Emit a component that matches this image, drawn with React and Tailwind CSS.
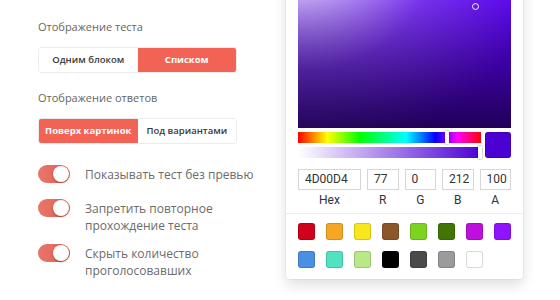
import React from 'react';

const font = { fontFamily: '"Open Sans", "Noto Sans", sans-serif' };

const swatches = [
  '#D0021B', '#F5A623', '#F8E71C', '#8B572A', '#7ED321', '#417505', '#BD10E0', '#9013FE',
  '#4A90E2', '#50E3C2', '#B8E986', '#000000', '#4A4A4A', '#9B9B9B', '#FFFFFF',
];

function Segmented({ left, right, active }) {
  const on = 'bg-[#f26355] text-white font-bold';
  const off = 'bg-white text-[#3a3a3a] font-semibold';
  return (
    <div className="flex h-[26px] w-[199px] overflow-hidden rounded-[3px] border border-[#ebebeb] text-[9.5px]">
      <button className={`flex-1 ${active === 0 ? on : off}`}>{left}</button>
      <button className={`flex-1 ${active === 1 ? on : off}`}>{right}</button>
    </div>
  );
}

function Toggle() {
  return (
    <div className="relative -mt-[1px] h-[18px] w-[32px] shrink-0 rounded-full bg-gradient-to-r from-[#e8766a] to-[#e55d50]">
      <div className="absolute right-[1px] top-[1px] h-[16px] w-[16px] rounded-full bg-white shadow-[0_1px_2px_rgba(0,0,0,0.35)]" />
    </div>
  );
}

function Option({ children, className = '' }) {
  return (
    <div className={`flex items-start gap-[15px] ${className}`}>
      <Toggle />
      <div className="w-[170px] text-[12px] leading-[17px] text-[#6b6b6b]">{children}</div>
    </div>
  );
}

function Field({ value, label, hex }) {
  return (
    <div className={hex ? 'flex-[2]' : 'flex-1 pl-[6px]'}>
      <div className="h-[21px] w-full border border-[#d6d6d6] pl-[6px] text-[12px] leading-[19px] text-[#333]">
        {value}
      </div>
      <div className="mt-[3px] text-center text-[12px] leading-[15px] text-[#333]">{label}</div>
    </div>
  );
}

function Picker() {
  return (
    <div
      className="-mt-[45px] w-[237px] self-start rounded-[4px] bg-white shadow-[0_0_0_1px_rgba(0,0,0,0.04),0_6px_14px_rgba(0,0,0,0.13)]"
      style={{ fontFamily: 'Roboto, "Liberation Sans", sans-serif' }}
    >
      <div className="px-[12px] pt-[12px]">
        {/* saturation area */}
        <div className="relative h-[161px] w-full overflow-hidden bg-[#5a00f5]">
          <div className="absolute inset-0 bg-[radial-gradient(ellipse_240px_190px_at_0_0,rgba(255,255,255,0.85),rgba(255,255,255,0.2)_55%,rgba(255,255,255,0))]" />
          <div className="absolute inset-0 bg-[linear-gradient(to_bottom,rgba(0,0,0,0)_15%,rgba(0,0,0,0.64))]" />
          <div className="absolute left-[174px] top-[36px] h-[7px] w-[7px] rounded-full border-[1.5px] border-white shadow-[0_0_1px_rgba(0,0,0,0.6)]" />
        </div>
        <div className="mt-[4px] flex gap-[4px]">
          <div className="flex flex-1 flex-col gap-[4px]">
            <div className="relative h-[11px] bg-[linear-gradient(to_right,#f00_0%,#ff0_16%,#0f0_34%,#0ff_59%,#00f_75%,#f0f_87%,#f00_100%)]">
              <div className="absolute -top-[1px] left-[147px] h-[13px] w-[4px] rounded-[1px] bg-white shadow-[0_0_2px_rgba(0,0,0,0.6)]" />
            </div>
            <div className="relative h-[11px] bg-[linear-gradient(to_right,rgba(77,0,212,0)_0%,rgba(77,0,212,1)_100%)]">
              <div className="absolute -top-[1px] left-[180px] h-[13px] w-[4px] rounded-[1px] bg-white shadow-[0_0_2px_rgba(0,0,0,0.6)]" />
            </div>
          </div>
          <div className="h-[26px] w-[26px] rounded-[3px] bg-[#4D00D4] shadow-[inset_0_0_0_1px_rgba(0,0,0,0.15)]" />
        </div>
        <div className="mt-[11px] flex pb-[5px]">
          <Field hex value="4D00D4" label="Hex" />
          <Field value="77" label="R" />
          <Field value="0" label="G" />
          <Field value="212" label="B" />
          <Field value="100" label="A" />
        </div>
      </div>
      <div className="flex flex-wrap gap-x-[11px] gap-y-[11px] border-t border-[#eee] px-[12px] pb-[11px] pt-[9px]">
        {swatches.map((c) => (
          <div
            key={c}
            className="h-[17px] w-[17px] rounded-[3px] shadow-[inset_0_0_0_1px_rgba(0,0,0,0.15)]"
            style={{ backgroundColor: c }}
          />
        ))}
      </div>
    </div>
  );
}

export default function App() {
  return (
    <div className="flex h-[300px] w-[560px] overflow-hidden bg-white" style={font}>
      <div className="w-[286px] shrink-0 pl-[38px] pt-[19px]">
        <div className="text-[11px] leading-[16px] text-[#666]">Отображение теста</div>
        <div className="mt-[12px]">
          <Segmented left="Одним блоком" right="Списком" active={1} />
        </div>
        <div className="mt-[17px] text-[11px] leading-[16px] text-[#666]">Отображение ответов</div>
        <div className="mt-[12px]">
          <Segmented left="Поверх картинок" right="Под вариантами" active={0} />
        </div>
        <Option className="mt-[22px]">Показывать тест без превью</Option>
        <Option className="mt-[17px]">Запретить повторное прохождение теста</Option>
        <Option className="mt-[11px]">Скрыть количество проголосовавших</Option>
      </div>
      <Picker />
    </div>
  );
}
